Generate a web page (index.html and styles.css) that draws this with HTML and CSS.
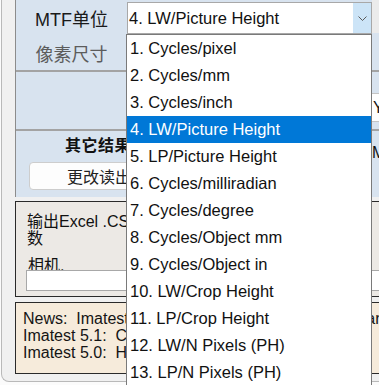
FILE: index.html
```html
<!DOCTYPE html>
<html lang="zh">

<head>
    <meta charset="UTF-8">
    <meta name="viewport" content="width=device-width, initial-scale=1.0">
    <title>MTF 设置</title>
    <link rel="stylesheet" href="styles.css">
</head>

<body>

    <div class="window">
        <div class="panel">
            <div class="row">
                <span class="label">MTF单位</span>
                <div class="select">
                    <span class="select-text">4. LW/Picture Height</span>
                    <span class="select-arrow">
                        <svg width="9" height="5" viewBox="0 0 9 5"><polyline points="0.5,0.5 4.5,4.5 8.5,0.5" fill="none" stroke="#5a5a5a" stroke-width="1"/></svg>
                    </span>
                </div>
                <div class="side side-top"></div>
            </div>
            <div class="row">
                <span class="label muted">像素尺寸</span>
            </div>
            <div class="section section-mid">
                <div class="section-left"></div>
                <div class="side side-combo">Y</div>
            </div>
            <div class="section section-other">
                <div class="section-left">
                    <div class="other-title">其它结果设置</div>
                    <button class="btn">更改读出设置</button>
                </div>
                <div class="side side-text">MTF</div>
            </div>
        </div>

        <div class="box box-export">
            <div class="export-text">输出Excel .CSV文件时附加的参<br>数</div>
            <div class="camera-label">相机,</div>
            <input class="camera-input" type="text">
        </div>

        <div class="box box-news">
            <div class="news-line">News:  Imatest 2023.1 is now available. Quick start guide</div>
            <div class="news-line">Imatest 5.1:  Color/Tone analysis improvements</div>
            <div class="news-line">Imatest 5.0:  HDR and dynamic range modules 5</div>
        </div>
    </div>

    <!-- open dropdown of the MTF unit select -->
    <ul class="dropdown">
        <li>1. Cycles/pixel</li>
        <li>2. Cycles/mm</li>
        <li>3. Cycles/inch</li>
        <li class="selected">4. LW/Picture Height</li>
        <li>5. LP/Picture Height</li>
        <li>6. Cycles/milliradian</li>
        <li>7. Cycles/degree</li>
        <li>8. Cycles/Object mm</li>
        <li>9. Cycles/Object in</li>
        <li>10. LW/Crop Height</li>
        <li>11. LP/Crop Height</li>
        <li>12. LW/N Pixels (PH)</li>
        <li>13. LP/N Pixels (PH)</li>
        <li>14. Line Widths/mm</li>
    </ul>

</body>

</html>
```

FILE: styles.css
```css
html,
body {
    margin: 0;
    height: 385px;
    overflow: hidden;
}

body {
    position: relative;
    background-color: #fbfbfb;
    font-family: "Liberation Sans", "Noto Sans CJK SC", sans-serif;
    font-size: 16px;
    color: #111;
}

.window {
    box-sizing: border-box;
    width: 760px;
    height: 382px;
    margin-left: 1px;
    padding-left: 13px;
    background-color: #f0f0f0;
    border-left: 1px solid #b9b9b9;
    border-bottom: 1px solid #b9b9b9;
    border-bottom-left-radius: 8px;
}

.panel {
    height: 197px;
    background-color: #d8e3ef;
    border-left: 1px solid #8c8c8c;
}

.row {
    display: grid;
    grid-template-columns: 111px 245px 1fr;
    height: 35px;
    align-items: center;
}

.label {
    text-align: center;
    font-size: 18px;
    color: #1a1a1a;
}

.label.muted {
    color: #5c5c5c;
}

.select {
    box-sizing: border-box;
    display: flex;
    align-self: start;
    height: 32px;
    margin-top: 2px;
    background: white;
    border: 1px solid #a8a8a8;
}

.select-text {
    flex: 1;
    padding-left: 1px;
    line-height: 30px;
    font-size: 16.5px;
}

.select-arrow {
    display: flex;
    align-items: center;
    justify-content: center;
    width: 18px;
    background-color: #cce4f7;
}

.side-top {
    align-self: start;
    height: 33px;
    background-color: #ebebeb;
}

.section {
    display: flex;
    border-top: 2px solid #a3a3a3;
}

.section-left {
    width: 356px;
}

.section-mid {
    height: 57px;
}

.side-combo {
    box-sizing: border-box;
    height: 29px;
    margin-top: 21px;
    padding-left: 1px;
    width: 120px;
    line-height: 27px;
    background: white;
    border-top: 1px solid #c4c4c4;
    border-bottom: 1px solid #c4c4c4;
}

.section-other {
    height: 66px;
}

.other-title {
    padding: 5px 0 0 49px;
    line-height: 20px;
    font-weight: bold;
    letter-spacing: 0.5px;
}

.btn {
    display: block;
    width: 172px;
    height: 28px;
    margin: 6px 0 0 13px;
    padding: 0 0 0 37px;
    text-align: left;
    font-family: inherit;
    font-size: 16px;
    color: #222;
    background-color: #fdfdfd;
    border: 1px solid #cdcdcd;
    border-radius: 4px;
}

.side-text {
    padding-top: 12px;
    line-height: 20px;
}

.box {
    box-sizing: border-box;
    border: 1px solid #2a2a2a;
}

.box-export {
    height: 96px;
    margin-top: 4px;
    padding: 11px 0 0 10px;
    background-color: #ece9e5;
}

.export-text {
    margin-left: 1px;
    line-height: 17px;
    white-space: nowrap;
}

.camera-label {
    height: 16px;
    margin: 7px 0 0 2px;
    line-height: 23px;
    overflow: hidden;
}

.camera-input {
    display: block;
    box-sizing: border-box;
    width: 520px;
    height: 21px;
    margin: 0;
    background: white;
    border: 1px solid #a8a8a8;
}

.box-news {
    height: 72px;
    margin-top: 5px;
    padding: 7px 0 0 7px;
    background-color: #f6ebdb;
}

.news-line {
    line-height: 17px;
    white-space: pre;
    color: #141414;
}

.dropdown {
    position: absolute;
    left: 126px;
    top: 34px;
    width: 244px;
    margin: 0;
    padding: 0;
    list-style: none;
    font-size: 16.5px;
    background: white;
    border: 1px solid #7a7a7a;
}

.dropdown li {
    height: 27px;
    padding-left: 3px;
    line-height: 27px;
    white-space: nowrap;
}

.dropdown li.selected {
    background-color: #0078d7;
    color: white;
}
```
